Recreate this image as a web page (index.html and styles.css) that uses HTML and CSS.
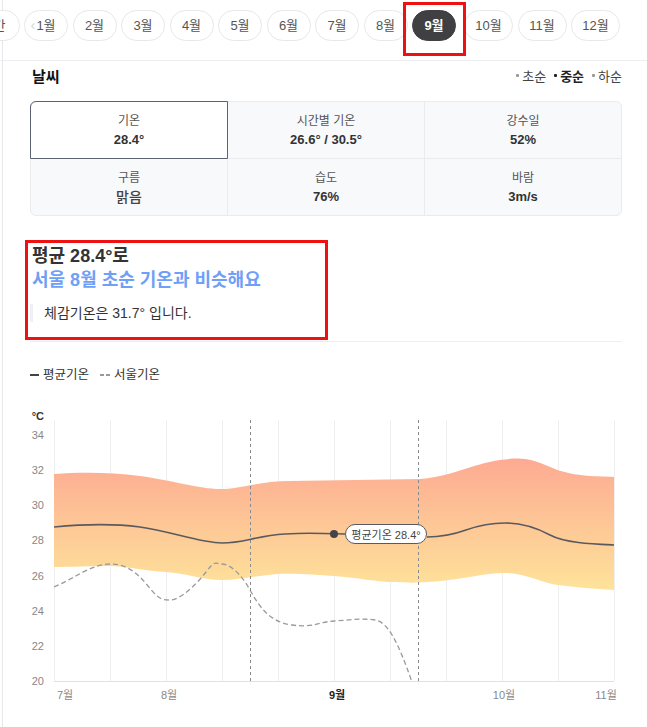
FILE: index.html
```html
<!DOCTYPE html>
<html lang="ko">
<head>
<meta charset="utf-8">
<link rel="stylesheet" href="styles.css">
</head>
<body>
<div class="page">
  <nav class="nav">
    <span class="pill first">연간</span>
    <span class="pill">1월</span>
    <span class="pill">2월</span>
    <span class="pill">3월</span>
    <span class="pill">4월</span>
    <span class="pill">5월</span>
    <span class="pill">6월</span>
    <span class="pill">7월</span>
    <span class="pill">8월</span>
    <span class="pill active">9월</span>
    <span class="pill wide after-active">10월</span>
    <span class="pill wide">11월</span>
    <span class="pill wide">12월</span>
    <span class="chev">‹</span>
  </nav>

  <section class="content">
    <div class="head">
      <h2 class="title">날씨</h2>
      <div class="tabs">
        <span class="tab"><i class="dot"></i>초순</span>
        <span class="tab on"><i class="dot"></i>중순</span>
        <span class="tab"><i class="dot"></i>하순</span>
      </div>
    </div>

    <div class="grid">
      <div class="cell active"><span class="lab">기온</span><span class="val">28.4°</span></div>
      <div class="cell"><span class="lab">시간별 기온</span><span class="val">26.6° / 30.5°</span></div>
      <div class="cell"><span class="lab">강수일</span><span class="val">52%</span></div>
      <div class="cell"><span class="lab">구름</span><span class="val word">맑음</span></div>
      <div class="cell"><span class="lab">습도</span><span class="val">76%</span></div>
      <div class="cell"><span class="lab">바람</span><span class="val">3m/s</span></div>
    </div>

    <div class="summary">
      <p class="h1">평균 28.4°로</p>
      <p class="h1 blue">서울 8월 초순 기온과 비슷해요</p>
      <p class="quote">체감기온은 31.7° 입니다.</p>
    </div>

    <hr class="sep">

    <div class="legend">
      <span class="lg"><i class="solid"></i>평균기온</span>
      <span class="lg"><i class="dash"></i>서울기온</span>
    </div>

    <svg class="chart" width="592" height="327" viewBox="30 400 592 327" xmlns="http://www.w3.org/2000/svg">
      <defs>
        <linearGradient id="band" x1="0" y1="0" x2="0" y2="1">
          <stop offset="0" stop-color="#fdaa92"/>
          <stop offset="1" stop-color="#fee39a"/>
        </linearGradient>
      </defs>
      <g stroke="#efefef" stroke-width="1">
        <line x1="54.5" y1="420" x2="54.5" y2="681"/>
        <line x1="110.5" y1="420" x2="110.5" y2="681"/>
        <line x1="166.5" y1="420" x2="166.5" y2="681"/>
        <line x1="222.5" y1="420" x2="222.5" y2="681"/>
        <line x1="278.5" y1="420" x2="278.5" y2="681"/>
        <line x1="334.5" y1="420" x2="334.5" y2="681"/>
        <line x1="390.5" y1="420" x2="390.5" y2="681"/>
        <line x1="446.5" y1="420" x2="446.5" y2="681"/>
        <line x1="502.5" y1="420" x2="502.5" y2="681"/>
        <line x1="558.5" y1="420" x2="558.5" y2="681"/>
        <line x1="614.5" y1="420" x2="614.5" y2="681"/>
      </g>
      <path fill="url(#band)" d="M54,474 C80,472 110,472 140,476 S200,489 220,489 S260,481 290,481 L420,479 C450,477 472,464 500,460 S535,461 555,469 S600,476 614,477 L614,590 C595,589 575,587 558,585 S525,573 505,573 S470,578 440,581 S400,582 390,582 S350,577 334,576 S295,573 278,574 S240,580 222,580 S185,573 166,572 S125,566 110,566 S70,567 54,567 Z"/>
      <line x1="54" y1="681.5" x2="614" y2="681.5" stroke="#e2e2e2"/>
      <path fill="none" stroke="#9a9a9a" stroke-width="1.3" stroke-dasharray="5 3" d="M54,587 C75,578 92,564 110,564 S138,574 148,586 S160,600 170,600 S196,585 206,572 S215,564 222,564 S240,572 250,590 S270,622 292,625 S318,622 334,621 S362,618 375,620 S398,642 412,682"/>
      <g stroke="#8a8a8a" stroke-width="1" stroke-dasharray="3 3">
        <line x1="250.5" y1="420" x2="250.5" y2="681"/>
        <line x1="418.5" y1="420" x2="418.5" y2="681"/>
      </g>
      <path fill="none" stroke="#5a5a5e" stroke-width="1.6" d="M54,527 C85,524 110,523 140,527 S200,543 222,543 S255,536 285,534 S320,534 345,534"/>
      <path fill="none" stroke="#5a5a5e" stroke-width="1.6" d="M427,537 C442,537 452,535 466,530 S490,523 505,523 S535,527 550,535 S592,544 614,545"/>
      <circle cx="334" cy="534" r="4" fill="#444448"/>
      <rect x="345.5" y="524.5" width="81" height="19" rx="9.5" fill="#fff" stroke="#5a5a5e"/>
      <text class="tip" x="386" y="538.5" text-anchor="middle">평균기온 28.4°</text>
      <g class="ytick" text-anchor="end">
        <text class="unit" x="44" y="420">°C</text>
        <text x="44" y="439">34</text>
        <text x="44" y="474">32</text>
        <text x="44" y="509">30</text>
        <text x="44" y="544">28</text>
        <text x="44" y="580">26</text>
        <text x="44" y="615">24</text>
        <text x="44" y="650">22</text>
        <text x="44" y="685">20</text>
      </g>
      <g class="xtick" text-anchor="middle">
        <text x="65" y="699">7월</text>
        <text x="169" y="699">8월</text>
        <text class="cur" x="337" y="699">9월</text>
        <text x="504" y="699">10월</text>
        <text x="606" y="699">11월</text>
      </g>
    </svg>
  </section>

  <div class="mark mark-month"></div>
  <div class="mark mark-summary"></div>
</div>
</body>
</html>
```

FILE: styles.css
```css
* { box-sizing: border-box; }
html, body { margin: 0; padding: 0; background: #fff; }
body {
  font-family: "Liberation Sans", "Noto Sans CJK KR", sans-serif;
  color: #333;
  overflow: hidden;
}
.page {
  position: relative;
  margin-left: 2px;
  border-left: 1px solid #e6e8ec;
  min-height: 727px;
}
.nav {
  position: relative;
  display: flex;
  gap: 4.5px;
  height: 61px;
  padding-top: 10px;
  margin-left: -30.5px;
  border-bottom: 1px solid #eceef1;
  white-space: nowrap;
}
.pill {
  flex: none;
  width: 44px;
  height: 31px;
  border: 1px solid #e8e8e8;
  border-radius: 16px;
  font-size: 13px;
  line-height: 29px;
  text-align: center;
  color: #555;
  background: #fff;
}
.pill.first { width: 47px; text-align: right; padding-right: 13px; }
.pill.wide { width: 49px; }
.pill.after-active { margin-left: 3.5px; }
.pill.active {
  background: #404042;
  border-color: #404042;
  color: #fff;
  font-weight: 700;
}
.chev {
  position: absolute;
  left: 58px;
  top: 16px;
  font-size: 15px;
  color: #d8d8d8;
}
.content { padding: 0 25px 0 27px; }
.head {
  display: flex;
  justify-content: space-between;
  align-items: center;
  height: 28px;
}
.title {
  margin: 0 0 0 2px;
  font-size: 15px;
  font-weight: 700;
  color: #111;
}
.tabs { display: flex; gap: 8px; font-size: 13px; }
.tab { display: flex; align-items: center; gap: 3px; color: #444; }
.tab.on { color: #222; font-weight: 700; }
.dot {
  width: 3px; height: 3px; border-radius: 1px;
  background: #999;
}
.tab.on .dot { background: #222; }

.grid {
  margin-top: 12px;
  display: grid;
  grid-template-columns: 1fr 1fr 1fr;
  grid-template-rows: 56px 56px;
  gap: 1px;
  background: #e9ebef;
  border: 1px solid #e9ebef;
  border-radius: 6px;
}
.cell {
  background: #f8f9fb;
  display: flex;
  flex-direction: column;
  align-items: center;
  padding-top: 11px;
  gap: 2px;
}
.cell:nth-child(3) { border-top-right-radius: 5px; }
.cell:nth-child(4) { border-bottom-left-radius: 5px; }
.cell:nth-child(6) { border-bottom-right-radius: 5px; }
.cell.active {
  background: #fff;
  outline: 1px solid #5b6272;
  border-top-left-radius: 5px;
}
.lab { font-size: 12px; line-height: 16px; color: #555; }
.val { font-size: 13px; line-height: 18px; font-weight: 700; color: #333; }
.val.word { font-size: 14px; font-weight: 500; color: #444; }

.summary { margin-top: 28px; }
.h1 {
  margin: 0 0 0 2px;
  font-size: 18px;
  line-height: 24px;
  font-weight: 700;
  color: #333;
}
.h1.blue { color: #6f9ff6; }
.quote {
  margin: 12px 0 0;
  padding-left: 11px;
  border-left: 3px solid #eef0f4;
  font-size: 14px;
  line-height: 18px;
  color: #333;
}
.sep {
  margin: 19px 0 0;
  border: 0;
  border-top: 1px solid #eceef1;
  height: 0;
}
.legend {
  margin-top: 24px;
  display: flex;
  gap: 11px;
  font-size: 12.5px;
  line-height: 18px;
  color: #333;
}
.lg { display: flex; align-items: center; gap: 4px; }
.solid { width: 9px; height: 2px; background: #444; }
.dash {
  width: 10px; height: 2px;
  background: linear-gradient(90deg, #999 0 4px, transparent 4px 6px, #999 6px 10px);
}
.chart { display: block; margin-top: 16px; }
.ytick text { font-size: 11px; fill: #888; }
.ytick .unit { fill: #333; font-weight: 700; }
.xtick text { font-size: 11px; fill: #888; }
.xtick .cur { fill: #222; font-weight: 700; }
.tip { font-size: 11px; fill: #444; }

.mark { position: absolute; border: 3px solid #ee1111; }
.mark-month { left: 400px; top: 2px; width: 63px; height: 54px; }
.mark-summary { left: 22px; top: 240px; width: 303px; height: 100px; }
```
